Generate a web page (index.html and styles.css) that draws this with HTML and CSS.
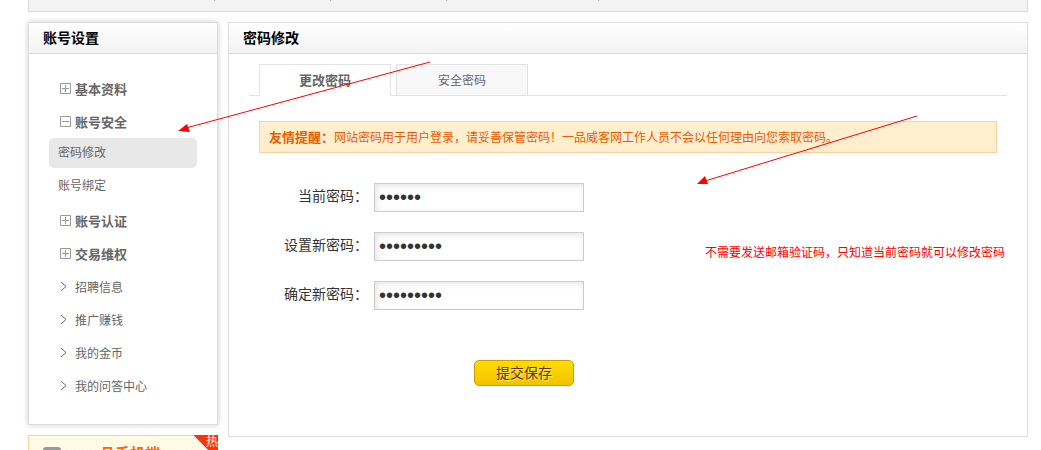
FILE: index.html
```
<!DOCTYPE html>
<html lang="zh-CN">
<head>
    <meta charset="UTF-8">
    <meta name="viewport" content="width=device-width, initial-scale=1.0">
    <title>密码修改</title>
    <link rel="stylesheet" href="styles.css">
</head>
<body>
    <div class="topbar">
        <i class="tick"></i><i class="tick"></i><i class="tick"></i><i class="tick tick-wide"></i>
    </div>
    <div class="container">
        <aside class="sidebar">
            <div class="panel side-panel">
                <h2 class="panel-title">账号设置</h2>
                <ul class="menu">
                    <li><a href="#" class="menu-item group"><svg class="icon" viewBox="0 0 11 11"><path d="M.5.5h10v10H.5zM2 5.5h7M5.5 2v7"/></svg>基本资料</a></li>
                    <li>
                        <a href="#" class="menu-item group"><svg class="icon" viewBox="0 0 11 11"><path d="M.5.5h10v10H.5zM2 5.5h7"/></svg>账号安全</a>
                        <ul class="submenu">
                            <li><a href="#" class="sub-item active">密码修改</a></li>
                            <li><a href="#" class="sub-item">账号绑定</a></li>
                        </ul>
                    </li>
                    <li><a href="#" class="menu-item group"><svg class="icon" viewBox="0 0 11 11"><path d="M.5.5h10v10H.5zM2 5.5h7M5.5 2v7"/></svg>账号认证</a></li>
                    <li><a href="#" class="menu-item group"><svg class="icon" viewBox="0 0 11 11"><path d="M.5.5h10v10H.5zM2 5.5h7M5.5 2v7"/></svg>交易维权</a></li>
                    <li><a href="#" class="menu-item"><svg class="icon arrow" viewBox="0 0 11 11"><path d="M1 1l5 4.500l-5 4.500"/></svg>招聘信息</a></li>
                    <li><a href="#" class="menu-item"><svg class="icon arrow" viewBox="0 0 11 11"><path d="M1 1l5 4.500l-5 4.500"/></svg>推广赚钱</a></li>
                    <li><a href="#" class="menu-item"><svg class="icon arrow" viewBox="0 0 11 11"><path d="M1 1l5 4.500l-5 4.500"/></svg>我的金币</a></li>
                    <li><a href="#" class="menu-item"><svg class="icon arrow" viewBox="0 0 11 11"><path d="M1 1l5 4.500l-5 4.500"/></svg>我的问答中心</a></li>
                </ul>
            </div>
            <a href="#" class="promo">
                <span class="phone"></span>
                <span class="promo-text">一品手机端</span>
                <span class="hot">热</span>
            </a>
        </aside>
        <main class="panel main">
            <h2 class="panel-title">密码修改</h2>
            <div class="tabs">
                <a href="#" class="tab current">更改密码</a>
                <a href="#" class="tab">安全密码</a>
            </div>
            <p class="notice"><strong>友情提醒：</strong>网站密码用于用户登录，请妥善保管密码！一品威客网工作人员不会以任何理由向您索取密码。</p>
            <form class="form">
                <div class="row">
                    <label for="old-password">当前密码：</label>
                    <input type="password" id="old-password" class="input" value="123456">
                </div>
                <div class="row">
                    <label for="new-password">设置新密码：</label>
                    <input type="password" id="new-password" class="input" value="123456789">
                </div>
                <div class="row">
                    <label for="confirm-password">确定新密码：</label>
                    <input type="password" id="confirm-password" class="input" value="123456789">
                </div>
                <button type="submit" class="button">提交保存</button>
            </form>
        </main>
    </div>
    <!-- review notes drawn over the page -->
    <svg class="marks" width="1041" height="450">
        <path class="line" d="M430 62L186 128M917 116L705 181"/>
        <path class="head" d="M178 131l9-7 3 8zM697 184l8-8 3 8z"/>
    </svg>
    <p class="remark">不需要发送邮箱验证码，只知道当前密码就可以修改密码</p>
</body>
</html>
```
FILE: styles.css
```
* {
    margin: 0;
    padding: 0;
    box-sizing: border-box;
}
body {
    position: relative;
    height: 100vh;
    overflow: hidden;
    padding: 0 13px 0 28px;
    font-family: "Liberation Sans", "Noto Sans CJK SC", sans-serif;
    font-size: 12px;
    color: #666;
    background: #fff;
}
a {
    color: inherit;
    text-decoration: none;
}
ul {
    list-style: none;
}
.topbar {
    display: flex;
    gap: 115px;
    height: 12px;
    padding-left: 185px;
    border: 1px solid #ddd;
    border-top: none;
    background: #f3f3f3;
}
.tick {
    width: 1px;
    height: 1px;
    background: #bbb;
}
.tick-wide {
    margin-left: 36px;
}
.container {
    display: flex;
    align-items: flex-start;
    gap: 10px;
    margin-top: 10px;
}
.sidebar {
    width: 190px;
    flex-shrink: 0;
}
.panel {
    border: 1px solid #ddd;
    background: #fff;
}
.side-panel {
    box-shadow: 0 0 6px rgba(0, 0, 0, 0.2);
}
.panel-title {
    height: 31px;
    padding-left: 14px;
    border-bottom: 1px solid #ddd;
    background: linear-gradient(#fff, #f3f3f3);
    font-size: 14px;
    line-height: 31px;
    color: #000;
}
.menu {
    padding: 18px 20px 22px;
}
.menu-item {
    display: flex;
    align-items: center;
    gap: 4px;
    height: 33px;
    padding-left: 11px;
}
.group {
    font-size: 13px;
    font-weight: bold;
}
.icon {
    width: 11px;
    height: 11px;
    fill: none;
    stroke: #999;
}
.arrow {
    stroke: #666;
}
.sub-item {
    display: block;
    height: 30px;
    margin-bottom: 3px;
    padding-left: 9px;
    border-radius: 5px;
    line-height: 30px;
}
.active {
    background: #e8e8e8;
}
.promo {
    position: relative;
    display: flex;
    gap: 24px;
    height: 60px;
    margin-top: 10px;
    padding: 8px 0 0 14px;
    border: 1px solid #fdd0a0;
    background: linear-gradient(#fffbe6, #fff5dc);
}
.phone {
    width: 18px;
    height: 30px;
    margin-top: 3px;
    border-radius: 3px;
    background: #999;
}
.promo-text {
    font-size: 15px;
    font-weight: bold;
    line-height: 20px;
    color: #f60;
}
.hot {
    position: absolute;
    top: -1px;
    right: -1px;
    width: 24px;
    height: 24px;
    background: linear-gradient(45deg, transparent 44%, #ccc 48%, #f30 50%);
    font-size: 12px;
    line-height: 14px;
    text-align: right;
    color: #fff;
}
.main {
    flex: 1;
}
.tabs {
    display: flex;
    gap: 5px;
    margin: 10px 20px 0;
    padding-left: 10px;
    border-bottom: 1px solid #e3e3e3;
}
.tab {
    width: 132px;
    height: 32px;
    margin-bottom: -1px;
    border: 1px solid #e3e3e3;
    background: #f8f8f8;
    line-height: 32px;
    text-align: center;
}
.current {
    border-bottom-color: #fff;
    background: #fff;
    font-size: 13px;
    font-weight: bold;
}
.notice {
    margin: 25px 30px 0;
    padding: 2px 9px 0;
    border: 1px solid #fdd0a0;
    background: #ffefcf;
    line-height: 28px;
    color: #e85c00;
}
.notice strong {
    font-size: 13px;
}
.form {
    padding: 30px 0 50px 30px;
}
.row {
    display: flex;
    gap: 6px;
    margin-bottom: 20px;
    font-size: 14px;
    line-height: 27px;
    color: #333;
}
.row label {
    width: 109px;
    text-align: right;
}
.input {
    width: 210px;
    height: 29px;
    padding: 0 4px;
    border: 1px solid #ccc;
    background: #fff;
    box-shadow: inset 2px 2px 6px rgba(0, 0, 0, 0.1);
    font-family: "Liberation Sans", sans-serif;
    font-size: 20px;
    color: #333;
}
.button {
    display: block;
    width: 100px;
    height: 26px;
    margin: 50px 0 0 215px;
    border: 1px solid #cf9c00;
    border-radius: 5px;
    background: linear-gradient(#ffdc00, #f3c200);
    font-family: inherit;
    font-size: 14px;
    line-height: 24px;
    color: #630;
    text-shadow: 1px 1px 1px #fff08a;
    cursor: pointer;
}
.marks {
    position: absolute;
    top: 0;
    left: 0;
    pointer-events: none;
}
.line {
    stroke: #f00;
}
.head {
    fill: #f00;
}
.remark {
    position: absolute;
    top: 244px;
    left: 705px;
    line-height: 18px;
    color: #f00;
}
```
